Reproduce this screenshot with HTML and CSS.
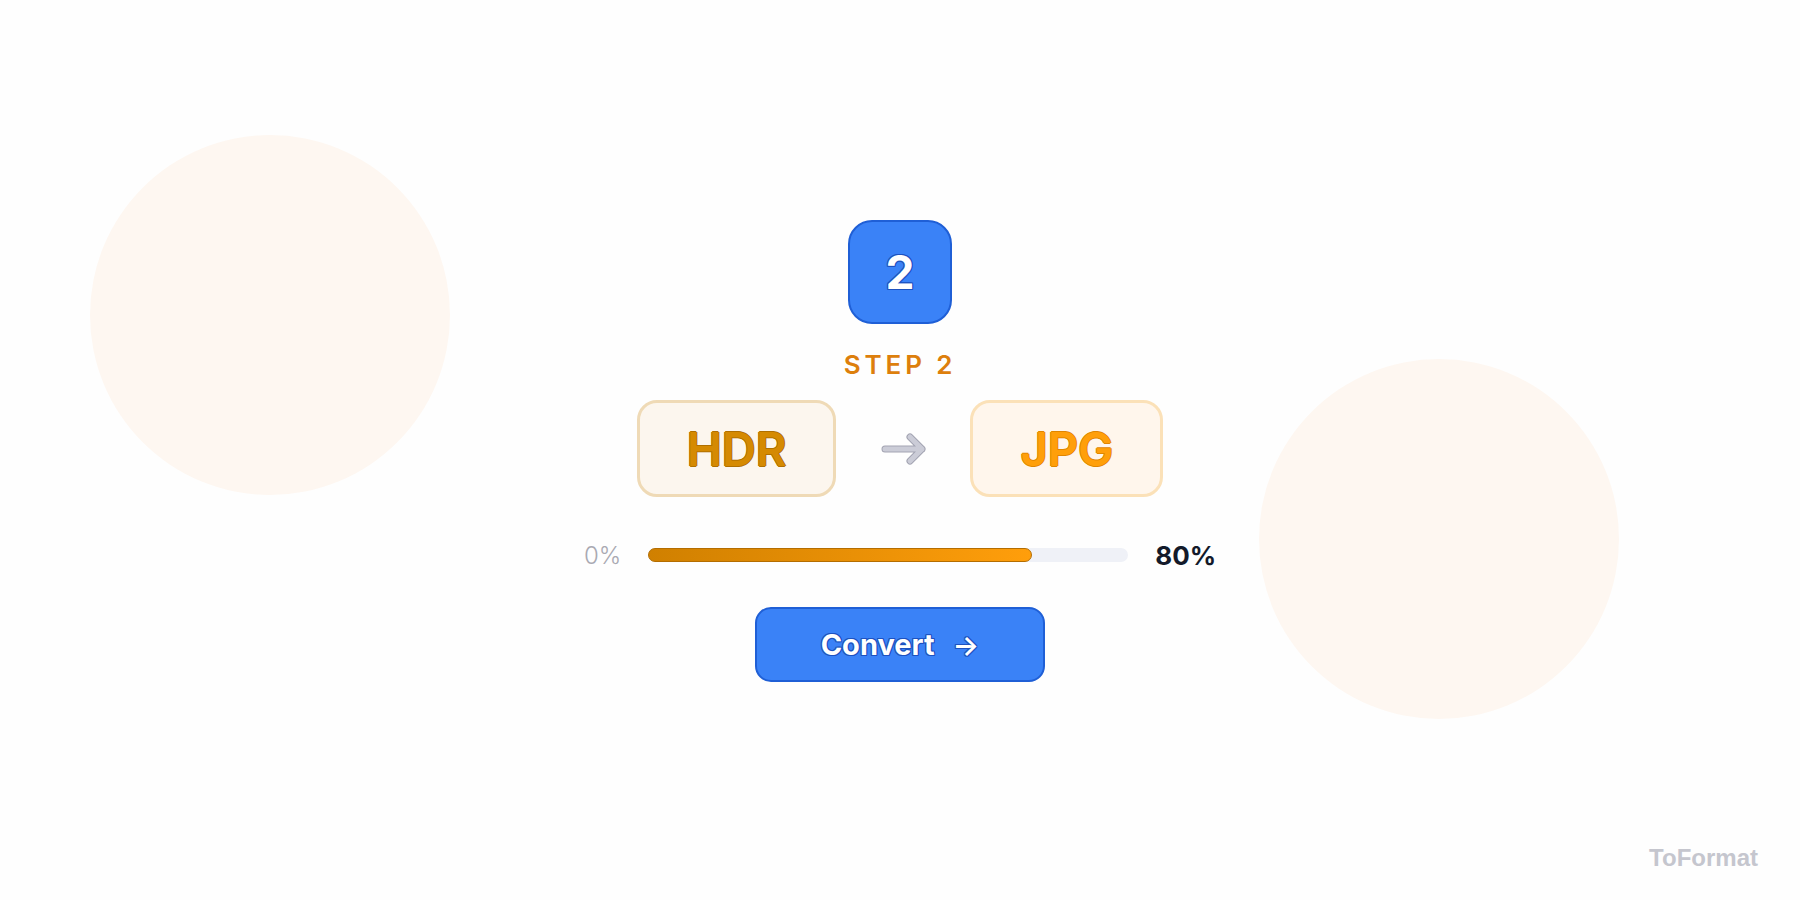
FILE: index.html
```html
<!DOCTYPE html>
<html lang="en">
<head>
<meta charset="utf-8">
<title>ToFormat – Step 2</title>
<link rel="stylesheet" href="styles.css">
</head>
<body>
<div class="page">
  <div class="blob blob-left"></div>
  <div class="blob blob-right"></div>

  <main class="stage">
    <div class="badge">2</div>
    <div class="step-label">STEP 2</div>

    <div class="formats">
      <div class="format format-from">HDR</div>
      <svg class="format-arrow" width="48" height="48" viewBox="0 0 48 48" aria-hidden="true">
        <path d="M6 24 H43 M31 12 L43 24 L31 36" fill="none" stroke="#a3a4b2" stroke-width="7" stroke-linecap="round" stroke-linejoin="round"/>
        <path d="M6 24 H43 M31 12 L43 24 L31 36" fill="none" stroke="#cbccd7" stroke-width="5" stroke-linecap="round" stroke-linejoin="round"/>
      </svg>
      <div class="format format-to">JPG</div>
    </div>

    <div class="progress">
      <span class="progress-start">0%</span>
      <div class="track"><div class="fill" style="width: 80%"></div></div>
      <span class="progress-value">80%</span>
    </div>

    <button class="convert" type="button">
      <span>Convert</span>
      <span class="convert-arrow">→</span>
    </button>
  </main>

  <div class="brand">ToFormat</div>
</div>
</body>
</html>
```

FILE: styles.css
```css
* { box-sizing: border-box; }

html, body {
  margin: 0;
  padding: 0;
}

body {
  background: #fefefe;
  font-family: Inter, "Noto Sans", "Liberation Sans", sans-serif;
}

.page {
  position: relative;
  width: 100%;
  height: 100vh;
  overflow: hidden;
}

.blob {
  position: absolute;
  width: 360px;
  height: 360px;
  border-radius: 50%;
  background: #fef7f1;
}

.blob-left { left: 90px; top: 135px; }
.blob-right { left: 1259px; top: 359px; }

.stage {
  position: relative;
  height: 100%;
  display: flex;
  flex-direction: column;
  align-items: center;
  justify-content: center;
  padding-top: 2px;
}

.badge {
  width: 104px;
  height: 104px;
  border-radius: 24px;
  background: #3a82f7;
  border: 2px solid #1f5fd6;
  display: flex;
  align-items: center;
  justify-content: center;
  color: #ffffff;
  font-size: 46px;
  font-weight: 700;
  line-height: 1;
  text-shadow:
    1px 0 0 #1d52c0, -1px 0 0 #1d52c0, 0 1px 0 #1d52c0, 0 -1px 0 #1d52c0,
    1px 1px 0 #1d52c0, -1px -1px 0 #1d52c0, 1px -1px 0 #1d52c0, -1px 1px 0 #1d52c0;
}

.step-label {
  margin-top: 28px;
  font-size: 26px;
  line-height: 26px;
  font-weight: 600;
  letter-spacing: 0.15em;
  color: #dd7f0c;
}

.formats {
  margin-top: 22px;
  display: flex;
  align-items: center;
  gap: 43px;
}

.format {
  height: 97px;
  padding: 0 47px;
  border-radius: 20px;
  border: 3px solid;
  display: flex;
  align-items: center;
  justify-content: center;
  font-size: 47px;
  font-weight: 600;
  line-height: 1;
}

.format-from {
  background: #fcf6ee;
  border-color: #efdab6;
  color: #d58a02;
  text-shadow:
    1px 0 0 #b07000, -1px 0 0 #b07000, 0 1px 0 #b07000, 0 -1px 0 #b07000;
}

.format-to {
  background: #fff6ec;
  border-color: #fbe1b8;
  color: #ff9f0a;
  text-shadow:
    1px 0 0 #e08600, -1px 0 0 #e08600, 0 1px 0 #e08600, 0 -1px 0 #e08600;
}

.format-arrow { display: block; }

.progress {
  margin-top: 42px;
  display: flex;
  align-items: center;
  gap: 27px;
  height: 32px;
}

.progress-start {
  font-size: 24px;
  font-weight: 300;
  color: #a9a9b2;
}

.track {
  width: 480px;
  height: 14px;
  border-radius: 7px;
  background: #eff1f7;
}

.fill {
  height: 100%;
  border-radius: 7px;
  background: linear-gradient(90deg, #d08000, #ff9e0b);
  border: 1px solid #b46d00;
}

.progress-value {
  font-size: 26px;
  font-weight: 700;
  color: #131a2a;
}

.convert {
  margin-top: 36px;
  height: 75px;
  padding: 0 64px;
  border-radius: 16px;
  background: #3a82f7;
  border: 2px solid #1f5fd6;
  display: flex;
  align-items: center;
  gap: 18px;
  font-family: Inter, "Liberation Sans", sans-serif;
  font-size: 29px;
  font-weight: 700;
  color: #ffffff;
  text-shadow:
    1px 0 0 #1d52c0, -1px 0 0 #1d52c0, 0 1px 0 #1d52c0, 0 -1px 0 #1d52c0,
    1px 1px 0 #1d52c0, -1px -1px 0 #1d52c0, 1px -1px 0 #1d52c0, -1px 1px 0 #1d52c0;
  cursor: pointer;
}

.convert-arrow {
  font-size: 28px;
  font-weight: 600;
}

.brand {
  position: absolute;
  right: 42px;
  bottom: 28px;
  font-family: "Liberation Sans", Arial, sans-serif;
  font-size: 24px;
  font-weight: 700;
  color: #c5c6ce;
}
```
